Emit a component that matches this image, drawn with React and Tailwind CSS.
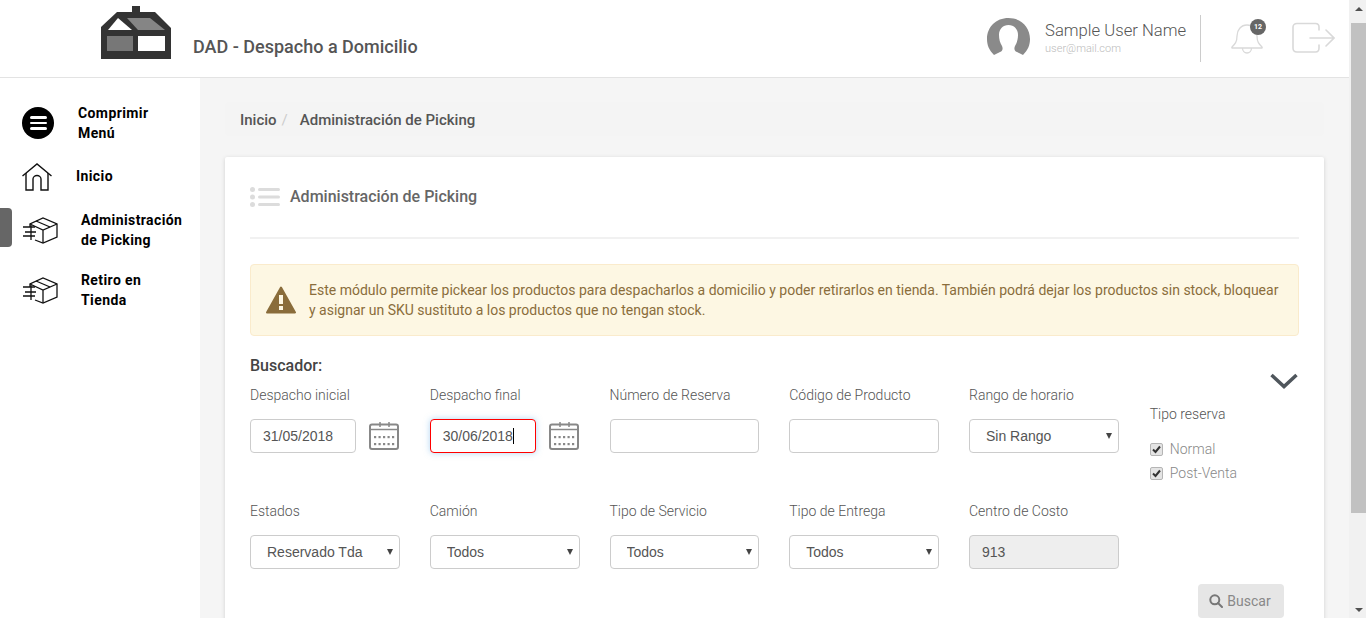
import React from "react";

function Logo() {
  return (
    <svg width="72" height="54" viewBox="0 0 72 54" className="block">
      <path d="M32 0h8v6h-8z" fill="#333" />
      <path d="M1 21 17 6h38l16 16v31H1z" fill="#333" />
      <path d="M8 24 18 12l14 12z" fill="#fff" />
      <path d="M27 12h23l15 12H38z" fill="#858585" />
      <rect x="7" y="30" width="26" height="15" fill="#777" />
      <rect x="38" y="30" width="27" height="15" fill="#fff" />
    </svg>
  );
}

function Avatar() {
  return (
    <svg width="43" height="37" viewBox="0 0 43 37" className="block">
      <path d="M7 37C2 32 0 27 0 21 0 9 9 0 21.500 0S43 9 43 21c0 6-2 11-7 16l-6-3c-3-1-3-4-2-6 2-3 3-7 3-11 0-6-4-10-9.500-10S12 11 12 17c0 4 1 8 3 11 1 2 1 5-2 6z" fill="#8a8a8a" />
    </svg>
  );
}

function Bell() {
  return (
    <svg width="32" height="32" viewBox="0 0 32 32" fill="none" stroke="#d9d9d9" strokeWidth="1.3" className="block">
      <path d="M1 25c3-3 5-5 5-11 0-6 4-11 10-11 6 0 10 5 10 11 0 6 2 8 5 11 .5 1 0 1-1 1H2c-1 0-1.500 0-1-1z" />
      <path d="M11.500 26c0 3 2 5 4.500 5s4.500-2 4.500-5" />
    </svg>
  );
}

function LogoutIcon() {
  return (
    <svg width="43" height="32" viewBox="0 0 43 32" fill="none" stroke="#d9d9d9" strokeWidth="1.6" strokeLinecap="round" className="block">
      <path d="M27 8V5c0-2-1-3.500-3.500-3.500H5C2.500 1.500 1 3 1 5v21c0 2.500 1.500 4 4 4h18.500c2.500 0 3.500-1.500 3.500-4v-3" />
      <path d="M18 16h24M34 8l8 8-8 8" />
    </svg>
  );
}

function Calendar() {
  return (
    <svg width="30" height="28" viewBox="0 0 30 28" fill="none" className="block shrink-0">
      <rect x="1" y="2.500" width="28" height="24.500" rx="2" stroke="#888" strokeWidth="2" />
      <path d="M1 7.500h28" stroke="#888" strokeWidth="1.500" />
      <path d="M11 0v5M20 0v5" stroke="#888" strokeWidth="1.500" />
      <g fill="#888">
        {[6, 10.500, 15, 19.500, 24].map((x) => (
          <React.Fragment key={x}>
            <rect x={x - 1} y="14" width="2.200" height="2.200" />
            <rect x={x - 1} y="21" width="2.200" height="2.200" />
          </React.Fragment>
        ))}
      </g>
    </svg>
  );
}

function HomeIcon() {
  return (
    <svg width="30" height="28" viewBox="0 0 30 28" fill="none" stroke="#111" strokeWidth="1.400" className="block">
      <path d="M.5 13 15 1l14.500 12" />
      <path d="M4 10v17h7V16c0-2 2-3.500 4-3.500s4 1.500 4 3.500v11h7V10" />
    </svg>
  );
}

function BoxIcon() {
  return (
    <svg width="36" height="28" viewBox="0 0 36 28" fill="none" stroke="#111" strokeWidth="1.300" className="block -mt-[6px]">
      <path d="M8 10V7l13-6 14 6v13l-14 6-8-3" />
      <path d="M8 7l13 6 14-6M21 13v13" />
      <path d="M14 4l14 6" />
      <path d="M1 10h12M3 15h11M1 19h12M9 8v15" />
    </svg>
  );
}

function ListIcon() {
  return (
    <svg width="30" height="20" viewBox="0 0 30 20" fill="#dcdcdc" className="block">
      <circle cx="2.500" cy="2.500" r="2.500" />
      <circle cx="2.500" cy="10" r="2.500" />
      <circle cx="2.500" cy="17.500" r="2.500" />
      <rect x="8" y="1" width="22" height="3" rx="1.500" />
      <rect x="8" y="8.500" width="22" height="3" rx="1.500" />
      <rect x="8" y="16" width="22" height="3" rx="1.500" />
    </svg>
  );
}

function Warning() {
  return (
    <svg width="30" height="28" viewBox="0 0 30 28" className="block shrink-0">
      <path d="M15 1.500 29 26.500H1z" fill="#8a6d3b" stroke="#8a6d3b" strokeWidth="2" strokeLinejoin="round" />
      <rect x="13" y="9" width="4" height="9" fill="#fdf7e3" />
      <rect x="13" y="20" width="4" height="4" fill="#fdf7e3" />
    </svg>
  );
}

function SearchIcon() {
  return (
    <svg width="14" height="14" viewBox="0 0 14 14" fill="none" stroke="#777" strokeWidth="2" className="block">
      <circle cx="5.800" cy="5.800" r="4.500" />
      <path d="m9 9 4 4" strokeLinecap="round" />
    </svg>
  );
}

function Label({ children }) {
  return <label className="block h-[19px] text-[14px] leading-[19px] font-light text-[#555]">{children}</label>;
}

function SelectField({ label, value }) {
  return (
    <div>
      <Label>{label}</Label>
      <div className="relative mt-[14px] w-[149.750px]">
        <select
          defaultValue={value}
          className="block h-[34px] w-full appearance-none rounded-[4px] border border-[#ccc] bg-white pl-[16px] font-['Liberation_Sans',sans-serif] text-[14px] text-[#555]"
        >
          <option>{value}</option>
        </select>
        <span className="absolute right-[7px] top-[14px] h-0 w-0 border-x-[3px] border-t-[6px] border-x-transparent border-t-[#444]" />
      </div>
    </div>
  );
}

const inputCls = "block h-[34px] rounded-[4px] border border-[#ccc] px-[12px] font-['Liberation_Sans',sans-serif] text-[14px] text-[#555] outline-none";

function TextField({ label }) {
  return (
    <div>
      <Label>{label}</Label>
      <input className={`mt-[14px] w-[149.750px] bg-white ${inputCls}`} />
    </div>
  );
}

function DateField({ label, value, active }) {
  return (
    <div>
      <Label>{label}</Label>
      <div className="mt-[14px] flex w-[149px] items-center justify-between">
        <div className="relative">
          <input
            readOnly
            value={value}
            className={`w-[106px] bg-white ${inputCls} ${active ? "border-[#f00] shadow-[0_0_6px_rgba(102,175,233,0.5)]" : ""}`}
          />
          {active && <span className="absolute left-[83px] top-[9px] h-[16px] w-px bg-black" />}
        </div>
        <Calendar />
      </div>
    </div>
  );
}

function CheckRow({ children }) {
  return (
    <label className="flex h-[24px] items-center text-[14px] font-light text-[#888]">
      <span className="relative h-[13px] w-[13px]">
        <input type="checkbox" checked disabled readOnly className="m-0 block h-[13px] w-[13px] appearance-none rounded-[2px] border border-[#b5b5b5] bg-[#e4e4e4]" />
        <svg width="9" height="9" viewBox="0 0 9 9" fill="none" stroke="#333" strokeWidth="2" className="absolute left-[2px] top-[2px]">
          <path d="M1 4.500 3.500 7 8 1.500" />
        </svg>
      </span>
      <span className="ml-[7px]">{children}</span>
    </label>
  );
}

function NavItem({ icon, children, iconCls, textCls }) {
  return (
    <div className={`flex ${iconCls}`}>
      {icon}
      <div className={`text-[14px] leading-[20px] font-bold tracking-[0.4px] text-black ${textCls}`}>{children}</div>
    </div>
  );
}

export default function App() {
  return (
    <div className="flex h-[618px] w-[1366px] overflow-hidden bg-white font-['Roboto',sans-serif]">
      <div className="w-[1349px] shrink-0">
        <header className="flex h-[78px] items-start border-b border-[#e3e3e3] bg-white">
          <div className="ml-[100px] mt-[6px]"><Logo /></div>
          <div className="ml-[21px] mt-[36px] text-[18px] leading-[22px] font-medium text-[#555]">DAD - Despacho a Domicilio</div>
          <div className="ml-auto flex items-start">
            <div className="mt-[18px]"><Avatar /></div>
            <div className="ml-[15px] mt-[19px]">
              <div className="text-[16.650px] leading-[24px] font-light text-[#555]">Sample User Name</div>
              <div className="-mt-[1px] text-[11px] leading-[13px] font-light text-[#bbb]">user@mail.com</div>
            </div>
            <div className="ml-[14px] mt-[15px] h-[47px] w-px bg-[#ccc]" />
            <div className="relative ml-[30px] mt-[22px]">
              <Bell />
              <span className="absolute -right-[3px] -top-[3px] flex h-[16px] w-[16px] items-center justify-center rounded-full bg-[#666] text-[7px] font-bold text-white">12</span>
            </div>
            <div className="ml-[29px] mr-[14px] mt-[22px]"><LogoutIcon /></div>
          </div>
        </header>
        <div className="flex h-[540px]">
          <aside className="relative w-[200px] shrink-0 bg-white pt-[25px]">
            <span className="absolute left-0 top-[130px] h-[39px] w-[12px] rounded-r-[4px] bg-[#666]" />
            <NavItem
              iconCls="pl-[22px] h-[60px]"
              textCls="ml-[24px]"
              icon={
                <span className="mt-[4px] flex h-[32px] w-[32px] shrink-0 flex-col items-center justify-center gap-[3px] rounded-full bg-black">
                  <span className="h-[2.500px] w-[17px] rounded bg-white" />
                  <span className="h-[2.500px] w-[17px] rounded bg-white" />
                  <span className="h-[2.500px] w-[17px] rounded bg-white" />
                </span>
              }
            >
              Comprimir<br />Menú
            </NavItem>
            <NavItem iconCls="pl-[22px] h-[60px]" textCls="ml-[24px] mt-[3px]" icon={<HomeIcon />}>Inicio</NavItem>
            <NavItem iconCls="pl-[22px] h-[60px]" textCls="ml-[23px] -mt-[13px]" icon={<BoxIcon />}>Administración<br />de Picking</NavItem>
            <NavItem iconCls="pl-[22px] h-[60px]" textCls="ml-[23px] -mt-[13px]" icon={<BoxIcon />}>Retiro en<br />Tienda</NavItem>
          </aside>
          <main className="min-w-0 flex-1 bg-[#f5f5f5] px-[25px] pt-[24px]">
            <nav className="flex h-[34px] items-center rounded-[4px] bg-[#f4f4f4] pl-[15px] pt-[2px] text-[15px] font-medium text-[#555]">
              <span>Inicio</span>
              <span className="ml-[5px] font-normal text-[#ccc]">/</span>
              <span className="ml-[12px]">Administración de Picking</span>
            </nav>
            <section className="relative mt-[21px] h-[600px] rounded-[2px] bg-white px-[25px] shadow-[0_1px_4px_rgba(0,0,0,0.15)]">
              <div className="flex h-[82px] items-center border-b-2 border-[#f1f1f1]">
                <ListIcon />
                <h1 className="ml-[10px] text-[16px] font-medium text-[#666]">Administración de Picking</h1>
              </div>
              <div className="mt-[25px] flex h-[72px] items-center rounded-[4px] border border-[#faebcc] bg-[#fdf7e3] px-[15px]">
                <Warning />
                <p className="ml-[13px] text-[14px] leading-[20px] text-[#8a6d3b]">
                  Este módulo permite pickear los productos para despacharlos a domicilio y poder retirarlos en tienda. También podrá dejar los productos sin stock, bloquear y asignar un SKU sustituto a los productos que no tengan stock.
                </p>
              </div>
              <h2 className="mt-[20px] h-[20px] text-[16px] leading-[20px] font-medium text-[#444]">Buscador:</h2>
              <svg width="28" height="16" viewBox="0 0 28 16" fill="none" stroke="#4f565c" strokeWidth="3.500" className="absolute left-[1045px] top-[216px] block">
                <path d="m1.500 2 12.500 11.500L26.500 2" />
              </svg>
              <div className="mt-[10px] grid grid-cols-[repeat(5,179.750px)_1fr] grid-rows-[116px_auto]">
                <DateField label="Despacho inicial" value="31/05/2018" />
                <DateField label="Despacho final" value="30/06/2018" active />
                <TextField label="Número de Reserva" />
                <TextField label="Código de Producto" />
                <SelectField label="Rango de horario" value="Sin Rango" />
                <div className="row-span-2 pl-[1px] pt-[19px]">
                  <Label>Tipo reserva</Label>
                  <div className="mt-[13px]">
                    <CheckRow>Normal</CheckRow>
                    <CheckRow>Post-Venta</CheckRow>
                  </div>
                </div>
                <SelectField label="Estados" value="Reservado Tda" />
                <SelectField label="Camión" value="Todos" />
                <SelectField label="Tipo de Servicio" value="Todos" />
                <SelectField label="Tipo de Entrega" value="Todos" />
                <div>
                  <Label>Centro de Costo</Label>
                  <input readOnly value="913" className={`mt-[14px] w-[149.750px] bg-[#eee] ${inputCls}`} />
                </div>
              </div>
              <div className="mt-[15px] flex justify-end pr-[15px]">
                <button className="flex h-[34px] w-[86px] items-center justify-center gap-[4px] rounded-[4px] bg-[#e6e6e6] pr-[2px] text-[14px] text-[#888]">
                  <SearchIcon /> Buscar
                </button>
              </div>
            </section>
          </main>
        </div>
      </div>
      <div className="flex w-[17px] shrink-0 flex-col items-end bg-[#f1f1f1]">
        <div className="flex h-[17px] w-[15px] items-center justify-center">
          <span className="h-0 w-0 border-x-[4px] border-b-[4px] border-x-transparent border-b-[#505050]" />
        </div>
        <div className="mt-[6px] h-[490px] w-[15px] bg-[#c1c1c1]" />
        <div className="mt-auto flex h-[17px] w-[15px] items-center justify-center">
          <span className="h-0 w-0 border-x-[4px] border-t-[4px] border-x-transparent border-t-[#505050]" />
        </div>
      </div>
    </div>
  );
}
